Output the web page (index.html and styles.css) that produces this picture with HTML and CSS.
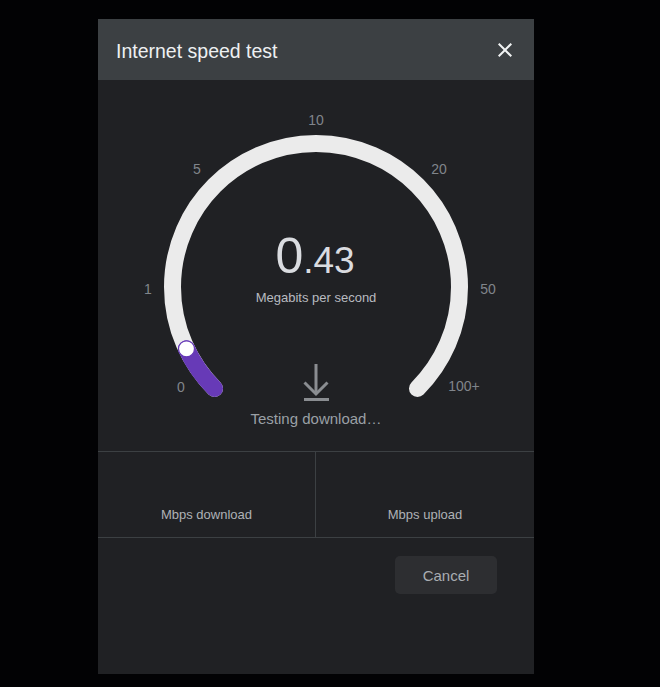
FILE: index.html
```html
<!DOCTYPE html>
<html lang="en">
<head>
<meta charset="utf-8">
<title>Internet speed test</title>
<link rel="stylesheet" href="styles.css">
</head>
<body>
<div class="dialog">
  <div class="header">
    <span class="title">Internet speed test</span>
    <svg class="close" width="24" height="24" viewBox="0 0 24 24" aria-label="Close">
      <path d="M19 6.41L17.59 5 12 10.59 6.41 5 5 6.41 10.59 12 5 17.59 6.41 19 12 13.41 17.59 19 19 17.59 13.41 12z" fill="#f1f3f4"/>
    </svg>
  </div>
  <div class="gauge">
    <svg class="gauge-svg" width="436" height="371" viewBox="0 0 436 371">
      <path d="M116.53 308.47 A143.5 143.5 0 1 1 319.47 308.47" fill="none" stroke="#ebebeb" stroke-width="17" stroke-linecap="round"/>
      <path d="M116.53 308.47 A143.5 143.5 0 0 1 88.5 268.8" fill="none" stroke="#673ab7" stroke-width="17" stroke-linecap="round"/>
      <circle cx="88.5" cy="268.8" r="8" fill="#ffffff" stroke="#673ab7" stroke-width="1.2"/>
      <g class="tick">
        <text x="218" y="45">10</text>
        <text x="99" y="94">5</text>
        <text x="341" y="94">20</text>
        <text x="50" y="214">1</text>
        <text x="390" y="214">50</text>
        <text x="83" y="312">0</text>
        <text x="366" y="311">100+</text>
      </g>
      <text class="value" x="217" y="193"><tspan class="int">0</tspan><tspan class="frac">.43</tspan></text>
      <text class="unit" x="218" y="222">Megabits per second</text>
      <g class="dl-icon" stroke="#8a8d91" stroke-width="3" fill="none">
        <line x1="218" y1="284" x2="218" y2="314"/>
        <polyline points="206.5,302.5 218,314 229.5,302.5"/>
        <line x1="206" y1="319.5" x2="231" y2="319.5"/>
      </g>
      <text class="status" x="218" y="344">Testing download…</text>
    </svg>
  </div>
  <div class="stats">
    <div class="cell"><span class="cell-label">Mbps download</span></div>
    <div class="cell divided"><span class="cell-label">Mbps upload</span></div>
  </div>
  <div class="footer">
    <button class="cancel" type="button">Cancel</button>
  </div>
</div>
</body>
</html>
```
FILE: styles.css
```css
html, body {
  margin: 0;
  padding: 0;
  background: #020204;
}
body {
  font-family: "Liberation Sans", Arial, sans-serif;
  padding-top: 19px;
  padding-left: 98px;
}
.dialog {
  width: 436px;
  height: 655px;
  background: #202124;
  display: flex;
  flex-direction: column;
}
.header {
  height: 61px;
  box-sizing: border-box;
  background: #3c4043;
  display: flex;
  align-items: center;
  justify-content: space-between;
  padding: 3px 17px 0 18px;
}
.title {
  color: #eef0f2;
  font-size: 19.5px;
}
.close {
  display: block;
  margin-top: -3px;
}
.gauge {
  height: 371px;
}
.gauge-svg {
  display: block;
}
.tick text {
  fill: #80858b;
  font-size: 14px;
  text-anchor: middle;
}
.value {
  fill: #dadce0;
  text-anchor: middle;
}
.int {
  font-size: 50px;
}
.frac {
  font-size: 37px;
}
.unit {
  fill: #b8bbc0;
  font-size: 13px;
  text-anchor: middle;
}
.status {
  fill: #9aa0a6;
  font-size: 15px;
  text-anchor: middle;
}
.stats {
  display: grid;
  grid-template-columns: 217px 1fr;
  height: 87px;
  box-sizing: border-box;
  border-top: 1px solid #3c4043;
  border-bottom: 1px solid #3c4043;
}
.cell {
  display: flex;
  flex-direction: column;
  justify-content: flex-end;
  align-items: center;
  padding-bottom: 15px;
}
.divided {
  border-left: 1px solid #3c4043;
}
.cell-label {
  color: #aeb1b6;
  font-size: 13px;
  line-height: 15px;
}
.footer {
  display: flex;
  justify-content: flex-end;
  padding: 18px 37px 0 0;
}
.cancel {
  width: 102px;
  height: 38px;
  background: #2d2e31;
  border: none;
  border-radius: 5px;
  color: #a9adb2;
  font-family: "Liberation Sans", Arial, sans-serif;
  font-size: 15px;
  padding: 0;
}
```
